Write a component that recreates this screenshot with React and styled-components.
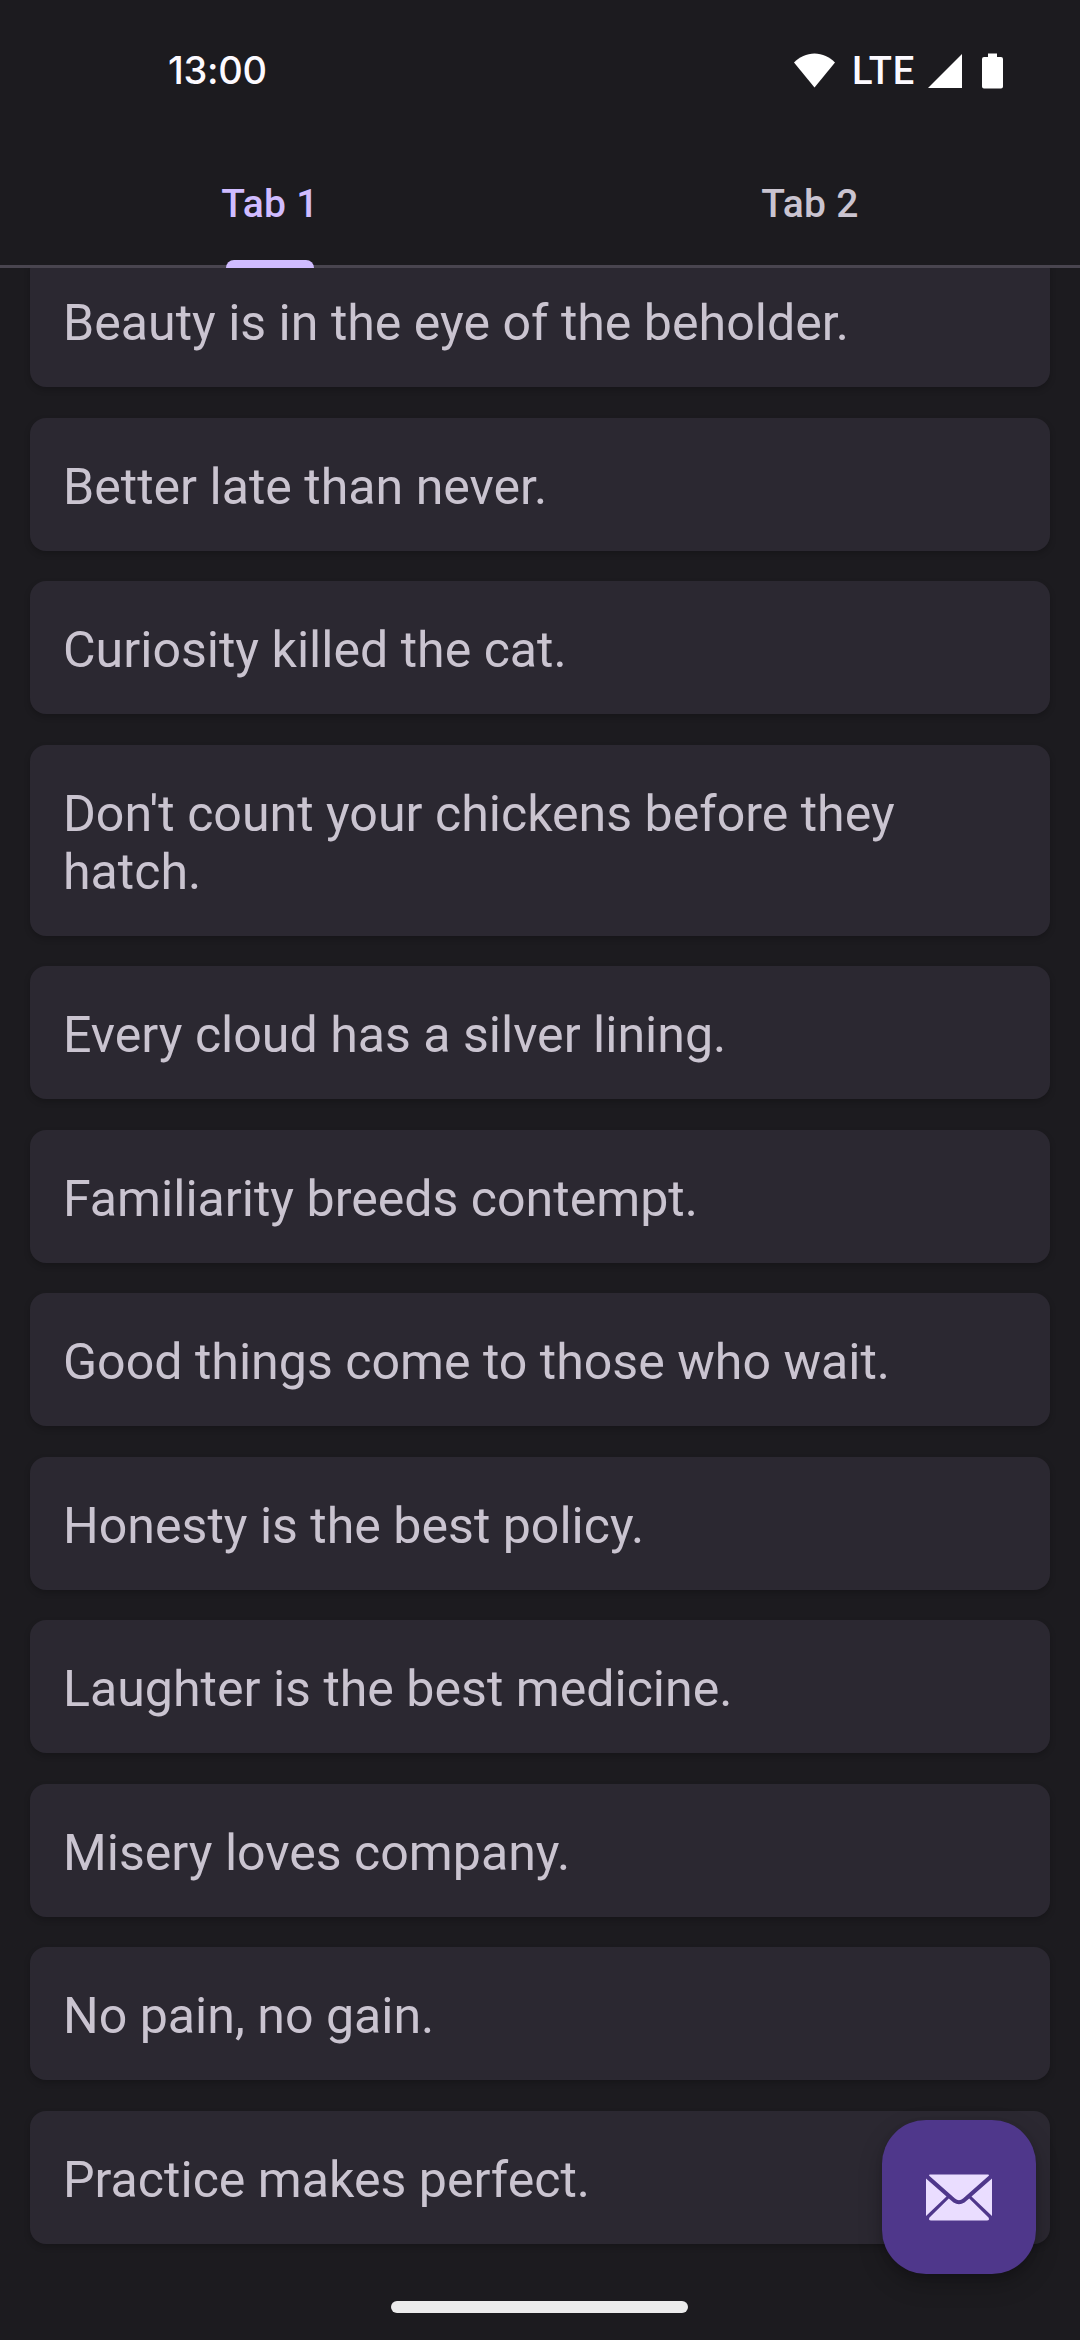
import React from "react";
import styled, { createGlobalStyle } from "styled-components";

const Global = createGlobalStyle`
  * { box-sizing: border-box; }
  html, body { margin: 0; background: #1c1b1f; }
`;

const Screen = styled.div`
  position: relative;
  display: flex;
  flex-direction: column;
  width: 1080px;
  height: 2340px;
  overflow: hidden;
  background: #1c1b1f;
  font-family: Roboto, "Noto Sans", sans-serif;
`;

const StatusBar = styled.header`
  flex: none;
  display: flex;
  justify-content: space-between;
  height: 136px;
  padding: 48px 77px 0 168px;
  color: #fcfaff;
  font-family: Inter, Roboto, sans-serif;
  font-weight: 500;
  font-size: 38px;
  line-height: 44px;
`;

const Clock = styled.span`
  letter-spacing: -0.3px;
`;

const StatusIcons = styled.div`
  display: flex;
  align-items: flex-start;
  svg { display: block; fill: #fff; }
`;

const Network = styled.span`
  width: 66px;
  margin: 0 10px 0 17px;
  padding-top: 1px;
  font-family: Roboto, sans-serif;
  font-weight: 500;
  letter-spacing: 0.9px;
`;

const SignalIcon = styled.svg`
  margin: 6px 20px 0 0;
`;

const TopIcon = styled.svg`
  margin-top: 5px;
`;

const Tabs = styled.nav`
  flex: none;
  display: flex;
  height: 132px;
  border-bottom: 3px solid #49454f;
`;

const Tab = styled.button`
  flex: 1;
  display: flex;
  flex-direction: column;
  align-items: center;
  justify-content: space-between;
  height: 132px;
  padding: 45px 0 0;
  border: 0;
  background: none;
  color: ${(p) => (p.$active ? "#d0bcff" : "#cac4d0")};
  font: 500 39px/46px Roboto, sans-serif;
  letter-spacing: 0.3px;
`;

const Indicator = styled.span`
  width: 88px;
  height: 8px;
  border-radius: 8px 8px 0 0;
  background: #d0bcff;
`;

const ListViewport = styled.main`
  flex: 1;
  min-height: 0;
  overflow: hidden;
`;

const List = styled.ul`
  display: flex;
  flex-direction: column;
  gap: 30.5px;
  margin: -14px 0 0;
  padding: 0 30px;
  list-style: none;
`;

const Card = styled.li`
  padding: 40px 33px 35px;
  border-radius: 16px;
  background: #2b2831;
  box-shadow: 0 3px 6px rgba(0, 0, 0, 0.2);
  color: #cac4d0;
  font-size: 50.1px;
  line-height: 58px;
`;

const Fab = styled.button`
  position: absolute;
  right: 44px;
  bottom: 66px;
  display: flex;
  align-items: center;
  justify-content: center;
  width: 154px;
  height: 154px;
  padding: 0;
  border: 0;
  border-radius: 44px;
  background: #4f378b;
  box-shadow: 0 10px 24px rgba(0, 0, 0, 0.22), 0 3px 7px rgba(0, 0, 0, 0.12);
`;

const HomeBar = styled.div`
  position: absolute;
  left: 391px;
  bottom: 27px;
  width: 297px;
  height: 12px;
  border-radius: 6px;
  background: #ececec;
`;

const sayings = [
  "Beauty is in the eye of the beholder.",
  "Better late than never.",
  "Curiosity killed the cat.",
  "Don't count your chickens before they hatch.",
  "Every cloud has a silver lining.",
  "Familiarity breeds contempt.",
  "Good things come to those who wait.",
  "Honesty is the best policy.",
  "Laughter is the best medicine.",
  "Misery loves company.",
  "No pain, no gain.",
  "Practice makes perfect.",
];

export default function App() {
  return (
    <Screen>
      <Global />
      <StatusBar>
        <Clock>13:00</Clock>
        <StatusIcons>
          <TopIcon width="41" height="35" viewBox="0 0 41 35">
            <path d="M0 9.5C5.5 4 12.500.5 20.500.5S35.500 4 41 9.500L20.500 34.500Z" />
          </TopIcon>
          <Network>LTE</Network>
          <SignalIcon width="34" height="34" viewBox="0 0 34 34">
            <path d="M34 0V34H0Z" />
          </SignalIcon>
          <TopIcon width="21" height="36" viewBox="0 0 21 36">
            <path d="M6 0.500H15V4H19A2 2 0 0 1 21 6V33.500A2 2 0 0 1 19 35.500H2A2 2 0 0 1 0 33.500V6A2 2 0 0 1 2 4H6Z" />
          </TopIcon>
        </StatusIcons>
      </StatusBar>
      <Tabs>
        <Tab $active>
          Tab 1
          <Indicator />
        </Tab>
        <Tab>Tab 2</Tab>
      </Tabs>
      <ListViewport>
        <List>
          {sayings.map((text) => (
            <Card key={text}>{text}</Card>
          ))}
        </List>
      </ListViewport>
      <Fab aria-label="Compose mail">
        <svg width="66" height="47" viewBox="0 0 66 47">
          <path
            fill="#eaddff"
            d="M4 .5H62Q64 .5 62.500 2L37 24.500Q33 28 29 24.500L3.500 2Q2 .5 4 .5ZM0 4.500L20.500 22.500L0 42ZM66 4.500V42L45.500 22.500ZM22.800 24.500L27.500 28.500Q33 32 38.500 28.500L43.200 24.500L62.500 43.500Q64 46.500 61 46.500H5Q2 46.500 3.500 43.500Z"
          />
        </svg>
      </Fab>
      <HomeBar />
    </Screen>
  );
}
